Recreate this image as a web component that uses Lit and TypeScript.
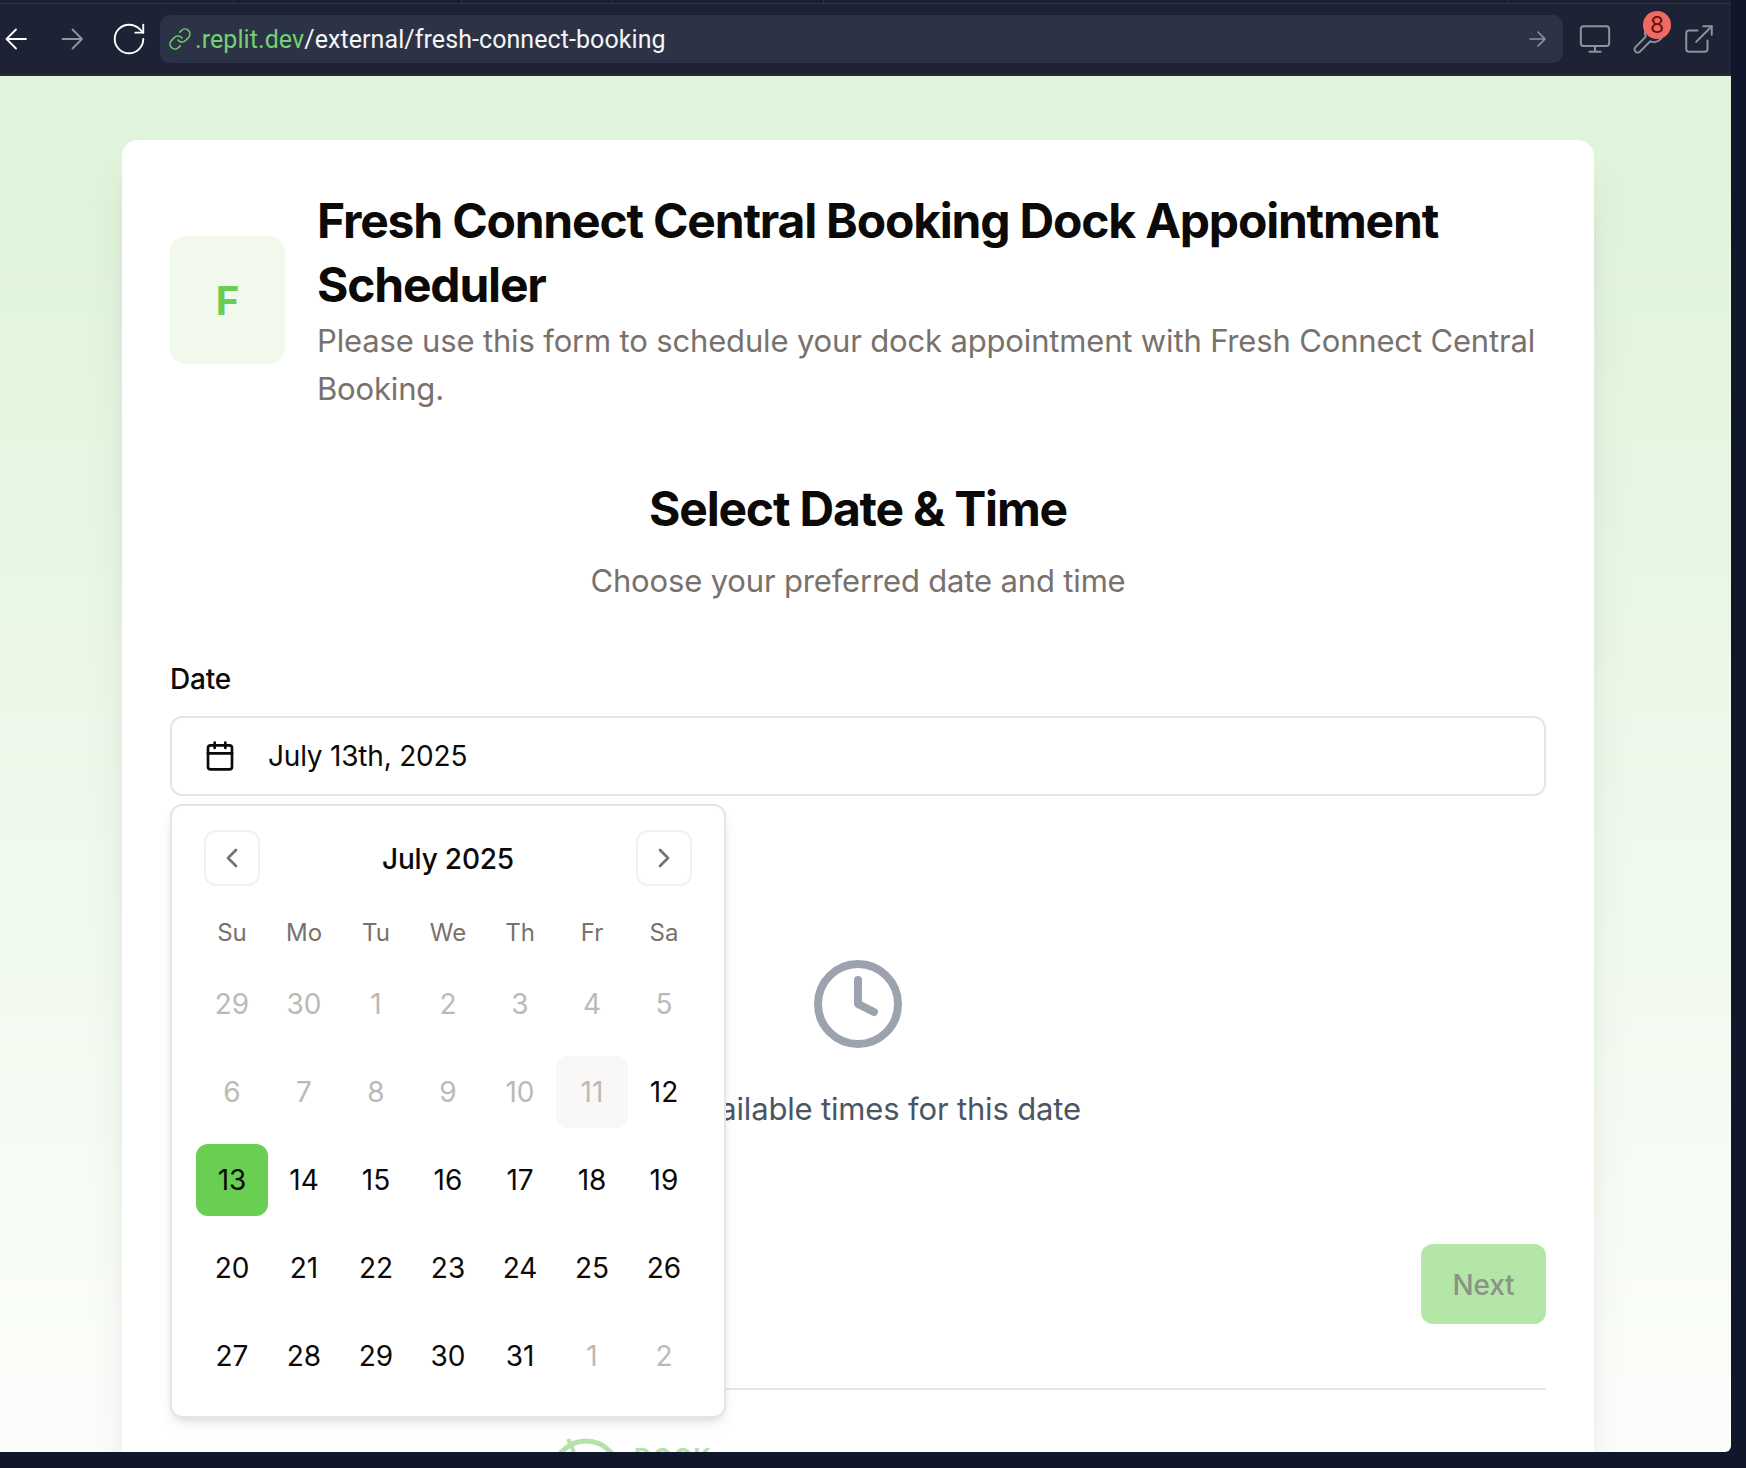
import { LitElement, html, css, svg } from 'lit';
import { customElement } from 'lit/decorators.js';
import { classMap } from 'lit/directives/class-map.js';

const WEEKDAYS = ['Su', 'Mo', 'Tu', 'We', 'Th', 'Fr', 'Sa'];

// leading and trailing days of the month are greyed out, as is everything before the 12th
const DAYS = [
  ...[29, 30, 1, 2, 3, 4, 5, 6, 7, 8, 9, 10, 11].map((n) => ({ n, off: true })),
  ...Array.from({ length: 20 }, (_, i) => ({ n: i + 12, off: false })),
  ...[1, 2].map((n) => ({ n, off: true })),
];

const lucide = (size: number, stroke: number, body: unknown) => html`<svg
  width=${size}
  height=${size}
  viewBox="0 0 24 24"
  fill="none"
  stroke="currentColor"
  stroke-width=${stroke}
  stroke-linecap="round"
  stroke-linejoin="round"
>${body}</svg>`;

@customElement('app-root')
export class AppRoot extends LitElement {
  static styles = css`
    :host {
      display: block;
      width: 1746px;
      height: 1468px;
      background: #10172a;
      overflow: hidden;
      font-family: Inter, 'Liberation Sans', sans-serif;
      color: #0c0a09;
    }
    svg { display: block; flex: none; }
    .window {
      width: 1731px;
      height: 1452px;
      border-bottom-right-radius: 6px;
      overflow: hidden;
      display: flex;
      flex-direction: column;
    }

    /* browser chrome */
    .tabs {
      height: 4px;
      flex: none;
      display: flex;
      background: #1a2031;
      border-bottom: 1px solid #2e3446;
      box-sizing: border-box;
    }
    .tabs span { border-right: 1px solid #2e3446; }
    .toolbar {
      height: 72px;
      flex: none;
      box-sizing: border-box;
      padding-left: 5px;
      border-bottom: 2px solid #252b3d;
      background: #1d2335;
      display: flex;
      align-items: center;
    }
    .nav-back { color: #fff; }
    .nav-forward { color: #94969d; margin-left: 33px; }
    .reload { color: #fff; margin-left: 26px; }
    .address {
      margin-left: 12px;
      width: 1403px;
      height: 48px;
      flex: none;
      box-sizing: border-box;
      padding: 0 16px 0 8px;
      border-radius: 10px;
      background: #2d3346;
      display: flex;
      align-items: center;
      color: #f4f5f7;
      font-family: Roboto, sans-serif;
      font-size: 25px;
      letter-spacing: 0.08px;
    }
    .address .link { color: #6fcf6f; margin-right: 3px; }
    .address .host { color: #73d173; }
    .address .go { margin-left: auto; color: #8f939c; }
    .tool { color: #8f939c; margin-left: 15px; position: relative; }
    .tool.wrench { margin: 0 1px 0 18px; }
    .badge {
      position: absolute;
      left: 13px;
      top: -10px;
      width: 28px;
      height: 28px;
      border-radius: 50%;
      background: #f06a63;
      color: #6d0f0c;
      font-size: 23px;
      line-height: 28px;
      text-align: center;
    }

    /* page */
    .page {
      flex: 1;
      min-height: 0;
      overflow: hidden;
      padding: 64px 137px 0 122px;
      background: linear-gradient(180deg, #e0f4db 0%, #e0f4db 8%, #fdfefc 100%);
    }
    .card {
      background: #fff;
      border-radius: 16px;
      padding: 49px 48px 48px;
      box-shadow: 0 40px 50px -10px rgba(0, 0, 0, 0.1), 0 16px 20px -12px rgba(0, 0, 0, 0.1);
    }
    .header {
      display: flex;
      align-items: center;
      gap: 32px;
    }
    .tile {
      width: 115px;
      height: 128px;
      flex: none;
      margin-top: -2px;
      border-radius: 16px;
      background: #f0f9ec;
      color: #68cf52;
      font-size: 40px;
      font-weight: 700;
      display: flex;
      align-items: center;
      justify-content: center;
    }
    h1 {
      margin: 0;
      font-size: 48px;
      line-height: 64px;
      font-weight: 700;
      letter-spacing: -1.2px;
    }
    .lead {
      margin: 0;
      font-size: 31px;
      line-height: 48px;
      letter-spacing: -0.16px;
      color: #78716c;
    }
    .step { text-align: center; margin-top: 64px; }
    h2 {
      margin: 0 0 16px;
      font-size: 48px;
      line-height: 64px;
      font-weight: 700;
      letter-spacing: -1.2px;
    }
    .label {
      margin-top: 54px;
      font-size: 28px;
      line-height: 40px;
      font-weight: 500;
      letter-spacing: -0.2px;
    }
    .field { position: relative; margin-top: 17px; }
    .input {
      height: 80px;
      box-sizing: border-box;
      border: 2px solid #e7e5e4;
      border-radius: 12px;
      padding: 0 32px;
      display: flex;
      align-items: center;
      gap: 32px;
      font-size: 28px;
      letter-spacing: -0.2px;
    }
    .popover {
      position: absolute;
      left: 0;
      top: 88px;
      width: 556px;
      box-sizing: border-box;
      background: #fff;
      border: 2px solid #e7e5e4;
      border-radius: 12px;
      padding: 24px;
      box-shadow: 0 8px 16px -4px rgba(0, 0, 0, 0.1), 0 4px 8px -4px rgba(0, 0, 0, 0.1);
    }
    .month {
      display: flex;
      align-items: center;
      justify-content: space-between;
      padding: 0 8px;
      font-size: 28px;
      font-weight: 500;
      letter-spacing: -0.2px;
    }
    .month span { padding-top: 1px; }
    .step-btn {
      width: 56px;
      height: 56px;
      box-sizing: border-box;
      border: 2px solid #f2f1f0;
      border-radius: 12px;
      color: #78716c;
      display: flex;
      align-items: center;
      justify-content: center;
    }
    .weekdays {
      margin-top: 27px;
      display: grid;
      grid-template-columns: repeat(7, 72px);
      justify-items: center;
      font-size: 24px;
      line-height: 40px;
      color: #78716c;
    }
    .days {
      margin-top: 15px;
      display: grid;
      grid-template-columns: repeat(7, 72px);
      grid-auto-rows: 72px;
      row-gap: 16px;
    }
    .day {
      border-radius: 12px;
      font-size: 28px;
      display: flex;
      align-items: center;
      justify-content: center;
    }
    .day.off { color: #bdbab6; }
    .day.today { background: #f9f8f7; }
    .day.selected { background: #68cf52; }
    .times {
      padding-top: 160px;
      display: flex;
      flex-direction: column;
      align-items: center;
      color: #9ca3af;
    }
    .times p {
      margin: 33px 0 0;
      font-size: 31px;
      line-height: 48px;
      letter-spacing: -0.16px;
      color: #4b5563;
    }
    .actions {
      margin-top: 111px;
      display: flex;
      justify-content: flex-end;
    }
    .next {
      width: 125px;
      height: 80px;
      box-sizing: border-box;
      padding-top: 2px;
      border-radius: 12px;
      background: #b4e6a7;
      color: #8a9384;
      font-size: 28px;
      font-weight: 500;
      letter-spacing: -0.2px;
      display: flex;
      align-items: center;
      justify-content: center;
    }
    .footer {
      margin-top: 64px;
      border-top: 2px solid #e7e5ec;
      padding: 48px 0 0 380px;
      display: flex;
      align-items: flex-start;
      gap: 12px;
      color: #b4e2a8;
    }
    .brand-name {
      margin-top: 8px;
      font-size: 24px;
      line-height: 24px;
      font-weight: 700;
      letter-spacing: 2px;
    }
  `;

  render() {
    return html`<div class="window">
      <div class="tabs">
        <span style="width: 233px"></span>
        <span style="width: 227px"></span>
        <span style="width: 150px"></span>
        <span style="width: 210px"></span>
        <span style="width: 683px"></span>
      </div>
      <div class="toolbar">
        <svg class="nav-back" width="23" height="22" viewBox="0 0 23 22" fill="none" stroke="currentColor" stroke-width="1.8" stroke-linecap="round" stroke-linejoin="round"><path d="M21 11H1.5M11 1.5 1.5 11l9.5 9.5"/></svg>
        <svg class="nav-forward" width="23" height="22" viewBox="0 0 23 22" fill="none" stroke="currentColor" stroke-width="1.8" stroke-linecap="round" stroke-linejoin="round"><path d="M1.5 11H21M11.5 1.5 21 11l-9.5 9.5"/></svg>
        <span class="reload">${lucide(38, 1.2, svg`<path d="M21 12a9 9 0 1 1-9-9c2.52 0 4.93 1 6.74 2.74L21 8"/><path d="M21 3v5h-5"/>`)}</span>
        <div class="address">
          <span class="link">${lucide(24, 1.6, svg`<path d="M10 13a5 5 0 0 0 7.54.54l3-3a5 5 0 0 0-7.07-7.07l-1.72 1.71"/><path d="M14 11a5 5 0 0 0-7.54-.54l-3 3a5 5 0 0 0 7.07 7.07l1.71-1.71"/>`)}</span>
          <span><span class="host">.replit.dev</span>/external/fresh-connect-booking</span>
          <svg class="go" width="18" height="18" viewBox="0 0 18 18" fill="none" stroke="currentColor" stroke-width="1.6" stroke-linecap="round" stroke-linejoin="round"><path d="M1 9h15M9 2l7 7-7 7"/></svg>
        </div>
        <span class="tool">${lucide(34, 1.4, svg`<rect x="2" y="3" width="20" height="14" rx="2"/><path d="M8 21h8M12 17v4"/>`)}</span>
        <span class="tool wrench">
          ${lucide(36, 1.3, svg`<path d="M14.7 6.3a1 1 0 0 0 0 1.4l1.6 1.6a1 1 0 0 0 1.4 0l3.77-3.77a6 6 0 0 1-7.94 7.94l-6.91 6.91a2.12 2.12 0 0 1-3-3l6.91-6.91a6 6 0 0 1 7.94-7.94l-3.76 3.76z"/>`)}
          <span class="badge">8</span>
        </span>
        <span class="tool">${lucide(34, 1.4, svg`<path d="M15 3h6v6"/><path d="M10 14 21 3"/><path d="M18 13v6a2 2 0 0 1-2 2H5a2 2 0 0 1-2-2V8a2 2 0 0 1 2-2h6"/>`)}</span>
      </div>
      <div class="page">
        <div class="card">
          <div class="header">
            <div class="tile">F</div>
            <div>
              <h1>Fresh Connect Central Booking Dock Appointment Scheduler</h1>
              <p class="lead">Please use this form to schedule your dock appointment with Fresh Connect Central Booking.</p>
            </div>
          </div>
          <div class="step">
            <h2>Select Date &amp; Time</h2>
            <p class="lead">Choose your preferred date and time</p>
          </div>
          <div class="label">Date</div>
          <div class="field">
            <div class="input">
              ${lucide(32, 2, svg`<path d="M8 2v4M16 2v4"/><rect x="3" y="4" width="18" height="18" rx="2"/><path d="M3 10h18"/>`)}
              <span>July 13th, 2025</span>
            </div>
            <div class="popover">
              <div class="month">
                <div class="step-btn">${lucide(32, 2, svg`<path d="m15 18-6-6 6-6"/>`)}</div>
                <span>July 2025</span>
                <div class="step-btn">${lucide(32, 2, svg`<path d="m9 18 6-6-6-6"/>`)}</div>
              </div>
              <div class="weekdays">${WEEKDAYS.map((d) => html`<span>${d}</span>`)}</div>
              <div class="days">
                ${DAYS.map(
                  (d, i) => html`<div
                    class=${classMap({
                      day: true,
                      off: d.off,
                      today: i === 12,
                      selected: i === 14,
                    })}
                  >${d.n}</div>`,
                )}
              </div>
            </div>
          </div>
          <div class="times">
            ${lucide(96, 2, svg`<circle cx="12" cy="12" r="10"/><path d="M12 6v6l4 2"/>`)}
            <p>No available times for this date</p>
          </div>
          <div class="actions"><div class="next">Next</div></div>
          <div class="footer">
            <svg width="72" height="72" viewBox="0 0 72 72" fill="none" stroke="currentColor" stroke-width="5"><circle cx="36" cy="36" r="33"/><path d="M18 1l6 13" stroke-width="4"/></svg>
            <span class="brand-name">DOCK</span>
          </div>
        </div>
      </div>
    </div>`;
  }
}
